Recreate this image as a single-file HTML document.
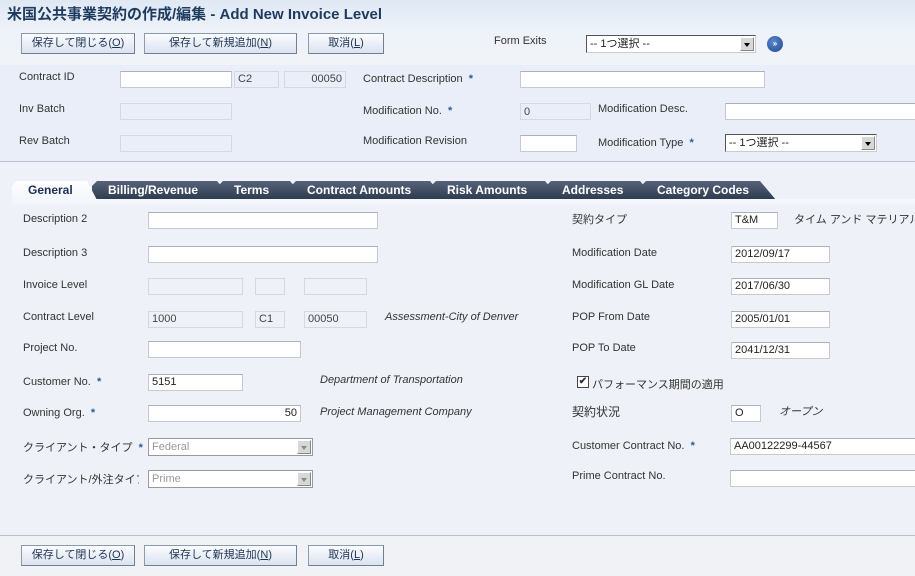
<!DOCTYPE html>
<html><head><meta charset="utf-8">
<style>
*{box-sizing:border-box;margin:0;padding:0}
body{width:915px;height:576px;overflow:hidden;position:relative;background:#eef1f8;font-family:"Liberation Sans","Noto Sans CJK JP",sans-serif;font-size:11px;color:#333}
.a{position:absolute;white-space:nowrap}
.top{position:absolute;left:0;top:0;width:915px;height:65px;background:linear-gradient(#dfe8f4,#eef2f9 30px,#f1f3f8)}
.hdr{position:absolute;left:0;top:65px;width:915px;height:96px;background:#e9eef8}
.title{left:7px;top:3px;font-size:15px;font-weight:bold;color:#1c3b5e}
.btn{position:absolute;height:21px;border:1px solid #8a9bb0;border-right-color:#6f7f94;border-bottom-color:#6f7f94;background:linear-gradient(#fbfcfe,#dbe3ef);color:#1d3555;font-size:11px;text-align:center;line-height:19px}
.in{position:absolute;height:17px;background:#fff;border:1px solid #c4c9d2;border-top-color:#a9b0bc;padding:0 3px;line-height:15px;font-size:11px;color:#222}
.ro{background:transparent;border:1px solid #d3d8e2;color:#444}
.sel{position:absolute;height:18px;background:#fff;border:1px solid #555;border-right-color:#ccc;border-bottom-color:#ccc;padding:0 3px;line-height:16px;color:#222}
.sel i{position:absolute;right:1px;top:1px;width:14px;height:14px;background:#d8d8d8;border:1px solid #888;border-top-color:#fff;border-left-color:#fff}
.sel i:after{content:"";position:absolute;left:3px;top:5px;border:3px solid transparent;border-top:4px solid #000}
.dis{color:#999;border-color:#999}
.dis i:after{border-top-color:#888}
.st{color:#2a5c9a;font-weight:bold}
.it{font-style:italic}
.tab{position:absolute;top:181px;height:19px;background:linear-gradient(#56637a,#2c3a4e);color:#fff;font-weight:bold;font-size:12px;line-height:19px;padding-left:16px;clip-path:polygon(0 100%,0 5px,5px 0,calc(100% - 16px) 0,100% 100%)}
.line{position:absolute;left:0;width:915px;height:1px;background:#b9c0cb}
</style></head><body>
<div class="top"></div>
<div class="hdr"></div>
<div class="a title">米国公共事業契約の作成/編集 - Add New Invoice Level</div>
<div class="btn" style="left:21px;top:33px;width:114px">保存して閉じる(<u>O</u>)</div>
<div class="btn" style="left:144px;top:33px;width:153px">保存して新規追加(<u>N</u>)</div>
<div class="btn" style="left:308px;top:33px;width:76px">取消(<u>L</u>)</div>
<div class="a" style="left:494px;top:35px">Form Exits</div>
<div class="sel" style="left:586px;top:35px;width:170px">-- 1つ選択 --<i></i></div>
<div class="a" style="left:767px;top:36px;width:16px;height:16px;border-radius:50%;background:radial-gradient(circle at 40% 35%,#5b86c8,#1c4a94);color:#fff;font-size:8px;font-weight:bold;line-height:16px;text-align:center">»</div>

<div class="a" style="left:19px;top:71px">Contract ID</div>
<div class="in" style="left:120px;top:71px;width:112px"></div>
<div class="in ro" style="left:234px;top:71px;width:45px">C2</div>
<div class="in ro" style="left:284px;top:71px;width:62px;text-align:right">00050</div>
<div class="a" style="left:363px;top:73px">Contract Description <span class="st">&nbsp;*</span></div>
<div class="in" style="left:520px;top:71px;width:245px"></div>
<div class="a" style="left:19px;top:103px">Inv Batch</div>
<div class="in ro" style="left:120px;top:103px;width:112px"></div>
<div class="a" style="left:363px;top:105px">Modification No. <span class="st">&nbsp;*</span></div>
<div class="in ro" style="left:520px;top:103px;width:71px;line-height:17px">0</div>
<div class="a" style="left:598px;top:103px">Modification Desc.</div>
<div class="in" style="left:725px;top:103px;width:200px"></div>
<div class="a" style="left:19px;top:135px">Rev Batch</div>
<div class="in ro" style="left:120px;top:135px;width:112px"></div>
<div class="a" style="left:363px;top:135px">Modification Revision</div>
<div class="in" style="left:520px;top:135px;width:57px"></div>
<div class="a" style="left:598px;top:137px">Modification Type <span class="st">&nbsp;*</span></div>
<div class="sel" style="left:725px;top:134px;width:152px">-- 1つ選択 --<i></i></div>
<div class="line" style="top:161px"></div>

<div class="tab" style="left:641px;width:135px">Category Codes</div>
<div class="tab" style="left:546px;width:110px">Addresses</div>
<div class="tab" style="left:431px;width:130px">Risk Amounts</div>
<div class="tab" style="left:291px;width:155px">Contract Amounts</div>
<div class="tab" style="left:218px;width:88px">Terms</div>
<div class="tab" style="left:92px;width:141px">Billing/Revenue</div>
<div class="tab" style="left:12px;width:95px;background:linear-gradient(#fff,#f3f6fb);color:#1c2f55;clip-path:polygon(0 100%,0 5px,5px 0,calc(100% - 20px) 0,calc(100% - 10px) 100%);">General</div>
<div class="a" style="left:12px;top:199px;width:903px;height:8px;background:linear-gradient(#f6f8fc,#eef1f8)"></div>

<div class="a" style="left:23px;top:213px">Description 2</div>
<div class="in" style="left:148px;top:212px;width:230px"></div>
<div class="a" style="left:23px;top:247px">Description 3</div>
<div class="in" style="left:148px;top:246px;width:230px"></div>
<div class="a" style="left:23px;top:279px">Invoice Level</div>
<div class="in ro" style="left:148px;top:278px;width:95px"></div>
<div class="in ro" style="left:255px;top:278px;width:30px"></div>
<div class="in ro" style="left:304px;top:278px;width:63px"></div>
<div class="a" style="left:23px;top:311px">Contract Level</div>
<div class="in ro" style="left:148px;top:311px;width:95px">1000</div>
<div class="in ro" style="left:255px;top:311px;width:30px">C1</div>
<div class="in ro" style="left:304px;top:311px;width:63px">00050</div>
<div class="a it" style="left:385px;top:311px">Assessment-City of Denver</div>
<div class="a" style="left:23px;top:342px">Project No.</div>
<div class="in" style="left:148px;top:341px;width:153px"></div>
<div class="a" style="left:23px;top:376px">Customer No. <span class="st">&nbsp;*</span></div>
<div class="in" style="left:148px;top:374px;width:95px">5151</div>
<div class="a it" style="left:320px;top:374px">Department of Transportation</div>
<div class="a" style="left:23px;top:407px">Owning Org. <span class="st">&nbsp;*</span></div>
<div class="in" style="left:148px;top:405px;width:153px;text-align:right">50</div>
<div class="a it" style="left:320px;top:406px">Project Management Company</div>
<div class="a" style="left:23px;top:439px">クライアント・タイプ <span class="st">&nbsp;*</span></div>
<div class="sel dis" style="left:148px;top:438px;width:165px">Federal<i></i></div>
<div class="a" style="left:23px;top:471px;width:116px;overflow:hidden">クライアント/外注タイプ</div>
<div class="sel dis" style="left:148px;top:470px;width:165px">Prime<i></i></div>

<div class="a" style="left:572px;top:211px">契約タイプ</div>
<div class="in" style="left:731px;top:212px;width:47px">T&amp;M</div>
<div class="a" style="left:794px;top:211px">タイム アンド マテリアル</div>
<div class="a" style="left:572px;top:247px">Modification Date</div>
<div class="in" style="left:731px;top:246px;width:99px">2012/09/17</div>
<div class="a" style="left:572px;top:279px">Modification GL Date</div>
<div class="in" style="left:731px;top:278px;width:99px">2017/06/30</div>
<div class="a" style="left:572px;top:311px">POP From Date</div>
<div class="in" style="left:731px;top:311px;width:99px">2005/01/01</div>
<div class="a" style="left:572px;top:342px">POP To Date</div>
<div class="in" style="left:731px;top:342px;width:99px">2041/12/31</div>
<div class="a" style="left:577px;top:376px;width:12px;height:12px;border:1px solid #444;background:#fff;font-size:10px;line-height:10px;text-align:center;font-weight:bold">✔</div>
<div class="a" style="left:592px;top:376px">パフォーマンス期間の適用</div>
<div class="a" style="left:572px;top:403px;font-size:12px">契約状況</div>
<div class="in" style="left:731px;top:405px;width:30px">O</div>
<div class="a it" style="left:779px;top:403px">オープン</div>
<div class="a" style="left:572px;top:440px">Customer Contract No. <span class="st">&nbsp;*</span></div>
<div class="in" style="left:730px;top:438px;width:195px">AA00122299-44567</div>
<div class="a" style="left:572px;top:470px">Prime Contract No.</div>
<div class="in" style="left:730px;top:470px;width:195px"></div>

<div class="line" style="top:535px"></div>
<div class="a" style="left:0;top:536px;width:915px;height:40px;background:#f0f2f6"></div>
<div class="btn" style="left:21px;top:545px;width:114px">保存して閉じる(<u>O</u>)</div>
<div class="btn" style="left:144px;top:545px;width:153px">保存して新規追加(<u>N</u>)</div>
<div class="btn" style="left:308px;top:545px;width:76px">取消(<u>L</u>)</div>
</body></html>
